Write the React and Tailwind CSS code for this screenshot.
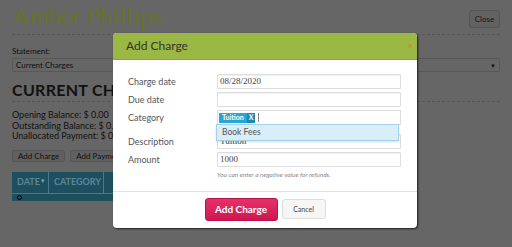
import React from "react";

const sans = { fontFamily: "Lato, 'Noto Sans', sans-serif" };

const Row = ({ label, children, className = "" }) => (
  <div className={`flex items-center ${className}`}>
    <div className="w-[89px] text-[9px] text-[#555]">{label}</div>
    <div className="flex-1">{children}</div>
  </div>
);

const Input = ({ value }) => (
  <div className="h-[15px] border border-[#ddd] rounded-[1px] bg-white px-[2px] flex items-center text-[9px] text-[#444] font-['Liberation_Serif',serif] shadow-[inset_0_1px_1px_rgba(0,0,0,0.06)]">
    {value}
  </div>
);

const Background = () => (
  <div className="px-3 pt-[3px] text-[#111]">
    <div className="flex items-start justify-between border-b border-dashed border-[#555] pb-[4px]">
      <div className="text-[24px] leading-[27px] text-[#65751f] font-['Liberation_Serif',serif] tracking-[0.3px]">
        Amber Phillips
      </div>
      <div className="mt-[7px] h-[18px] w-[31px] rounded-[3px] border border-[#555] bg-[#626262] text-[8px] flex items-center justify-center text-[#151515]">
        Close
      </div>
    </div>
    <div className="mt-[11px] text-[8px] leading-[10px]">Statement:</div>
    <div className="mt-[2px] h-[14px] border border-[#585858] rounded-[2px] bg-[#666] flex items-center justify-between px-[3px] text-[8px]">
      <span>Current Charges</span>
      <span className="text-[6px]">▼</span>
    </div>
    <div className="mt-[9px] text-[16px] leading-[18px] font-bold tracking-[0.3px] border-b border-dashed border-[#555] pb-[2px]">
      CURRENT CHARGES
    </div>
    <div className="mt-[8px] text-[9px] leading-[10.5px]">
      <div>Opening Balance: $ 0.00</div>
      <div>Outstanding Balance: $ 0.00</div>
      <div>Unallocated Payment: $ 0.00</div>
    </div>
    <div className="mt-[8px] flex gap-[5px] text-[8px]">
      <div className="h-[12px] px-[5px] rounded-[2px] border border-[#555] bg-[#606060] flex items-center">Add Charge</div>
      <div className="h-[12px] px-[5px] rounded-[2px] border border-[#555] bg-[#606060] flex items-center">Add Payment</div>
    </div>
    <div className="mt-[10px] w-[150px] bg-[#1e4f5e] text-[#5b8797]">
      <div className="flex h-[22px] text-[9px] font-bold border-b border-[#4a7a88]">
        <div className="w-[37px] border-r border-[#4a7a88] flex items-center pl-[5px]">
          DATE<span className="text-[6px] self-start mt-[4px] text-[#7aa3b0]">▼</span>
        </div>
        <div className="w-[55px] border-r border-[#4a7a88] flex items-center pl-[5px]">CATEGORY</div>
      </div>
      <div className="h-[7px] pl-[5px] flex items-center">
        <div className="w-[5px] h-[5px] rounded-full border-[1.5px] border-black" />
      </div>
    </div>
  </div>
);

export default function App() {
  return (
    <div className="relative w-[512px] h-[247px] bg-[#666] overflow-hidden" style={sans}>
      <Background />
      <div className="absolute left-[113px] top-[33px] w-[304px] h-[195px] bg-white rounded-[4px] shadow-[1px_1px_2px_rgba(0,0,0,0.7)] overflow-hidden flex flex-col">
        <div className="h-[27px] bg-[#9ab843] border-b border-[#89a63a] flex items-center justify-between pl-[13px] pr-[4px]">
          <span className="text-[12px] text-[#333]">Add Charge</span>
          <span className="text-[9px] text-[#e0812c] font-bold">×</span>
        </div>
        <div className="pl-[15px] pr-[16px] pt-[14px] relative">
          <Row label="Charge date">
            <Input value="08/28/2020" />
          </Row>
          <Row label="Due date" className="mt-[3px]">
            <Input value="" />
          </Row>
          <Row label="Category" className="mt-[3px]">
            <div className="h-[15px] border border-[#ddd] bg-white flex items-center pl-[1px] gap-[3px]">
              <div className="flex h-[10px] text-[7px] font-bold text-white">
                <span className="bg-[#2ba5d2] px-[3px] flex items-center">Tuition</span>
                <span className="bg-[#1f88b0] px-[2px] flex items-center">X</span>
              </div>
              <div className="w-[1px] h-[9px] bg-[#888]" />
            </div>
          </Row>
          <Row label="Description" className="mt-[9px]">
            <Input value="Tuition" />
          </Row>
          <Row label="Amount" className="mt-[3px]">
            <Input value="1000" />
          </Row>
          <div className="ml-[89px] mt-[3px] text-[6.5px] italic text-[#888]">
            You can enter a negative value for refunds.
          </div>
          <div className="absolute left-[103px] top-[64px] w-[183px] h-[17px] bg-[#d8eef8] border border-[#a3d1e6] shadow-[0_1px_2px_rgba(0,0,0,0.15)] flex items-center pl-[5px] text-[8.5px] text-[#555]">
            Book Fees
          </div>
        </div>
        <div className="mt-[11px] border-t border-[#e2e2e2] flex-1 flex items-center justify-center gap-[4px] pb-[1px]">
          <div className="w-[73px] h-[23px] rounded-[3px] bg-gradient-to-b from-[#e5306a] to-[#cf1551] border border-[#b8134a] text-white text-[10px] font-bold flex items-center justify-center">
            Add Charge
          </div>
          <div className="w-[44px] h-[20px] rounded-[3px] bg-[#f6f6f6] border border-[#ddd] text-[7px] text-[#444] flex items-center justify-center">
            Cancel
          </div>
        </div>
      </div>
    </div>
  );
}
